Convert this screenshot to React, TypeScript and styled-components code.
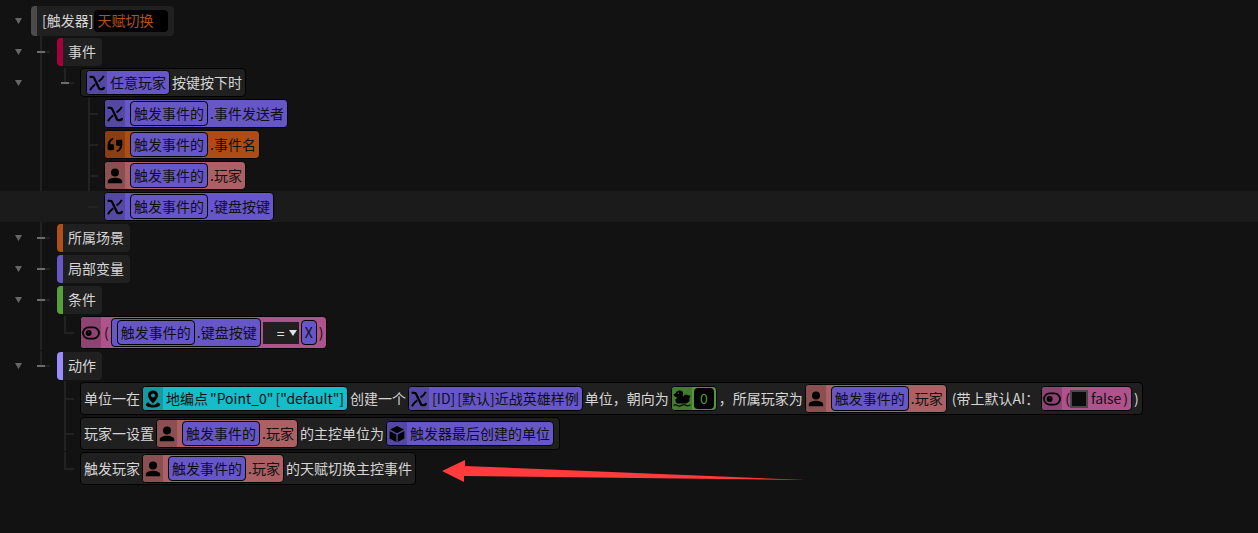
import React from "react";
import styled, { createGlobalStyle, css } from "styled-components";

const GlobalStyle = createGlobalStyle`
  * { box-sizing: border-box; }
  body {
    margin: 0;
    background: #121212;
    color: #d6d6d6;
    font-family: "Noto Sans CJK SC", "Noto Sans", sans-serif;
    font-size: 14px;
    line-height: 18px;
  }
`;

const palette = {
  any: { base: "#6656c8", icon: "#5548a3" },
  string: { base: "#ae4c14", icon: "#8c3e12" },
  player: { base: "#ac6063", icon: "#8a4f51" },
  bool: { base: "#b0528c", icon: "#8e4472" },
  point: { base: "#15bdc8", icon: "#149aa3" },
  number: { base: "#529836", icon: "#437c2e" },
};
type Tone = keyof typeof palette;

const Page = styled.main`
  padding: 5px 0 47px;
  overflow: hidden;
`;

const Tree = styled.ul`
  list-style: none;
  margin: 0;
  padding: 0;
`;

const RowItem = styled.li<{ $tall?: boolean; $active?: boolean }>`
  display: flex;
  align-items: center;
  height: ${(p) => (p.$tall ? 35 : 31)}px;
  background: ${(p) => (p.$active ? "#1b1b1b" : "transparent")};
  white-space: nowrap;
`;

const Gutter = styled.div<{ $narrow?: boolean }>`
  flex: none;
  display: flex;
  width: ${(p) => (p.$narrow ? 31 : 32)}px;
  padding-left: 12px;
`;

const Caret = styled.button`
  display: flex;
  align-items: center;
  justify-content: center;
  width: 13px;
  height: 12px;
  padding: 0;
  border: 0;
  background: none;
  color: #666;
`;

type GuideKind = "none" | "line" | "tee" | "end" | "stub";

const GuideCell = styled.div<{ $kind: GuideKind }>`
  flex: none;
  display: flex;
  align-items: center;
  align-self: stretch;
  width: 24px;
  padding-left: 8px;
  background-repeat: no-repeat;
  background-position: 8px 1px;
  ${(p) =>
    (p.$kind === "line" || p.$kind === "tee") &&
    css`
      background-image: linear-gradient(#222, #222);
      background-size: 2px 100%;
      background-position: 8px 0;
    `}
  ${(p) =>
    p.$kind === "end" &&
    css`
      background-image: linear-gradient(#222, #222);
      background-size: 2px 50%;
    `}
`;

const Dash = styled.span<{ $open?: boolean }>`
  width: 10px;
  height: 2px;
  background: #222;
  ${(p) =>
    p.$open &&
    css`
      width: 13px;
      margin-left: -3px;
      background: linear-gradient(to right, #6c6c6c 8px, #222 8px);
    `}
`;

const Section = styled.div<{ $root?: boolean; $color: string }>`
  display: flex;
  align-items: center;
  height: ${(p) => (p.$root ? 30 : 28)}px;
  margin-left: ${(p) => (p.$root ? 0 : 1)}px;
  padding: 0 6px 0 5px;
  border-left: 6px solid ${(p) => p.$color};
  border-radius: 4px;
  background: #202020;
`;

const NameInput = styled.input`
  width: 74px;
  height: 22px;
  margin-left: 1px;
  padding: 0 3px 2px;
  border: 0;
  border-radius: 4px;
  background: #000;
  color: #b5521a;
  font: inherit;
`;

const Statement = styled.div<{ $slim?: boolean }>`
  display: flex;
  align-items: center;
  gap: 2px;
  height: ${(p) => (p.$slim ? 29 : 33)}px;
  padding: 0 3px;
  border: 1px solid #000;
  border-radius: 4px;
  background: #202020;
`;

const Text = styled.span`
  padding-bottom: 2px;
  white-space: pre;
`;

const Chip = styled.span<{ $tone: Tone; $size?: "m" | "l" | "xl" }>`
  display: flex;
  align-items: stretch;
  height: ${(p) => (p.$size === "xl" ? 33 : p.$size === "l" ? 29 : 25)}px;
  border: 1px solid #000;
  border-radius: 4px;
  background: ${(p) => palette[p.$tone].base};
  color: #101010;
  overflow: hidden;

  ${Statement} > &:first-child { margin-left: 2px; }
  ${Statement} > &:last-child { margin-right: 2px; }
`;

const IconSlot = styled.span<{ $tone: Tone }>`
  display: flex;
  align-items: center;
  justify-content: center;
  width: 20px;
  background: ${(p) => palette[p.$tone].icon};
  color: #000;
`;

const ChipBody = styled.span<{ $tight?: boolean }>`
  display: flex;
  align-items: center;
  gap: 2px;
  padding: 0 ${(p) => (p.$tight ? 2 : 3)}px;

  > ${Chip}:first-child { margin-left: 2px; }
`;

const NumberInput = styled.input`
  width: 20px;
  height: 21px;
  padding: 0 0 2px;
  border: 0;
  border-radius: 4px;
  background: #000;
  color: #529836;
  font: inherit;
  text-align: center;
`;

const OperatorBox = styled.span`
  display: flex;
  align-items: center;
  width: 36px;
  height: 22px;
  padding-left: 14px;
  background: #202020;
  color: #e0e0e0;
`;

const OperatorSelect = styled.select`
  width: 12px;
  padding: 0;
  border: 0;
  appearance: none;
  background: none;
  color: inherit;
  font: inherit;
`;

const BoolLabel = styled.label`
  display: flex;
  align-items: center;
  gap: 3px;
`;

const BoolCheck = styled.input`
  appearance: none;
  width: 18px;
  height: 18px;
  margin: 0 0 0 -2px;
  border: 2px solid #484848;
  background: #0b0b0b;
`;

const Arrow = styled.svg`
  position: absolute;
  left: 442px;
  top: 459px;
  pointer-events: none;
`;

const VarIcon = () => (
  <svg width="16" height="16" viewBox="0 0 16 16" fill="none" stroke="currentColor">
    <path d="M0.6 1.8H3.6C4.4 1.8 4.8 2.2 5.1 2.9L10 13.2C10.3 13.9 10.8 14.2 11.6 14.2H12.6C14 14.2 14.8 13.4 15.2 12" strokeWidth="2.3" />
    <path d="M14.8 0.8C13.6 3.4 12 4.6 9.6 6.4" strokeWidth="1.9" />
    <path d="M6.2 9.2C4 11 2.4 12.6 1 15.2" strokeWidth="1.9" />
  </svg>
);

const QuoteIcon = () => (
  <svg width="16" height="16" viewBox="0 0 16 16" fill="currentColor">
    <path d="M6 0.8C2.4 2 0.6 4.8 0.6 8.4V11.8C0.6 12.6 1.1 13.2 2 13.2H5.6C6.5 13.2 7 12.6 7 11.8V8.6C7 7.8 6.5 7.2 5.6 7.2H3.2C3.2 4.8 4.2 3.2 6.4 2.4Z" />
    <path d="M10 15.2C13.6 14 15.4 11.2 15.4 7.6V4.2C15.4 3.4 14.9 2.8 14 2.8H10.4C9.5 2.8 9 3.4 9 4.2V7.4C9 8.2 9.5 8.8 10.4 8.8H12.8C12.8 11.2 11.8 12.8 9.6 13.6Z" />
  </svg>
);

const PlayerIcon = () => (
  <svg width="16" height="16" viewBox="0 0 16 16" fill="currentColor">
    <circle cx="8" cy="4.4" r="4" />
    <path d="M0.8 15.2V13.4C0.8 11 4.6 9.8 8 9.8S15.2 11 15.2 13.4V15.2Z" />
  </svg>
);

const ToggleIcon = () => (
  <svg width="18" height="14" viewBox="0 0 18 14">
    <rect x="1" y="1.4" width="16" height="11.2" rx="5.6" fill="none" stroke="currentColor" strokeWidth="1.8" />
    <circle cx="6.6" cy="7" r="3" fill="currentColor" />
    <circle cx="6.8" cy="6" r="0.6" fill={palette.bool.icon} />
  </svg>
);

const PinIcon = () => (
  <svg width="16" height="18" viewBox="0 0 16 18" fill="currentColor">
    <path fillRule="evenodd" d="M8 0.4A5 5 0 0 0 3 5.4C3 8.6 8 13.4 8 13.4S13 8.6 13 5.4A5 5 0 0 0 8 0.4ZM8 3.4A2 2 0 1 1 8 7.4A2 2 0 0 1 8 3.4Z" />
    <path d="M3.6 12.4C2 12.8 0.8 13.6 0.8 14.6C0.8 16.4 4.2 17.6 8 17.6S15.2 16.4 15.2 14.6C15.2 13.6 14 12.8 12.4 12.4C11.4 13.8 9.8 14.8 8 14.8S4.6 13.8 3.6 12.4Z" />
  </svg>
);

const CubeIcon = () => (
  <svg width="16" height="18" viewBox="0 0 16 18" fill="currentColor">
    <path d="M8 1L15 4.6L8 8.2L1 4.6Z" />
    <path d="M0.6 6L7.3 9.4V17L0.6 13.4Z" />
    <path d="M15.4 6L8.7 9.4V17L15.4 13.4Z" />
  </svg>
);

const DuckIcon = () => (
  <svg width="18" height="17" viewBox="0 0 18 17" fill="currentColor">
    <path
      fillRule="evenodd"
      d="M0.6 4.4L2.8 3.2C3.2 1.2 4.8 0.4 6.6 0.4C9 0.4 10.4 2 10.2 4C10.1 5.2 9.4 6 9.8 6.6C11 6.4 11 4.6 12.6 4.4C14.4 4.2 15.6 5.6 17.2 5.4C17.4 7.4 16.6 8.4 15.6 9C16.4 9.2 16.6 9.4 16.8 9.6C16.4 12 14.4 13.6 11.6 13.6H6.6C3.8 13.6 2.2 12.2 2.4 10.2C2.5 8.8 4 8 5 7.2C3.4 7.4 1.2 6.6 0.6 4.4ZM5.4 2.4A0.8 0.8 0 1 0 5.4 4A0.8 0.8 0 0 0 5.4 2.4Z"
    />
    <path d="M0.6 15.4C2 14.2 3 14.4 4.4 15.4S7.4 16.2 9 15.2S12 14.6 13.4 15.4S16 15.8 17.4 14.8" fill="none" stroke="currentColor" strokeWidth="1.2" />
  </svg>
);

const Triangle = ({ width, height }: { width: number; height: number }) => (
  <svg width={width} height={height} viewBox="0 0 8 6" preserveAspectRatio="none" fill="currentColor" aria-hidden="true">
    <path d="M0 0H8L4 6Z" />
  </svg>
);

const icons = {
  any: VarIcon,
  string: QuoteIcon,
  player: PlayerIcon,
  bool: ToggleIcon,
  point: PinIcon,
  number: DuckIcon,
  object: CubeIcon,
};

interface ValueProps {
  tone: Tone;
  icon?: keyof typeof icons;
  size?: "m" | "l" | "xl";
  tight?: boolean;
  children: React.ReactNode;
}

function Value({ tone, icon, size, tight, children }: ValueProps) {
  const Icon = icon ? icons[icon] : null;
  return (
    <Chip $tone={tone} $size={size}>
      {Icon && (
        <IconSlot $tone={tone}>
          <Icon />
        </IconSlot>
      )}
      <ChipBody $tight={tight}>
        {typeof children === "string" ? <Text>{children}</Text> : children}
      </ChipBody>
    </Chip>
  );
}

function EventValue({ tone, icon, field }: { tone: Tone; icon?: keyof typeof icons; field: string }) {
  return (
    <Value tone={tone} icon={icon} size="l">
      <Value tone="any">触发事件的</Value>
      <Text>.{field}</Text>
    </Value>
  );
}

interface RowProps {
  guides?: GuideKind[];
  open?: boolean;
  root?: boolean;
  tall?: boolean;
  active?: boolean;
  children: React.ReactNode;
}

function Row({ guides = [], open, root, tall, active, children }: RowProps) {
  return (
    <RowItem $tall={tall} $active={active}>
      <Gutter $narrow={root}>
        {open && (
          <Caret type="button" aria-label="折叠">
            <Triangle width={7} height={6} />
          </Caret>
        )}
      </Gutter>
      {guides.map((kind, i) => (
        <GuideCell key={i} $kind={kind}>
          {(kind === "tee" || kind === "end" || kind === "stub") && <Dash $open={open} />}
        </GuideCell>
      ))}
      {children}
    </RowItem>
  );
}

export default function App() {
  return (
    <Page>
      <GlobalStyle />
      <Tree>
        <Row open root>
          <Section $root $color="#4b4b4b">
            <Text>[触发器]</Text>
            <NameInput aria-label="触发器" defaultValue="天赋切换" />
          </Section>
        </Row>
        <Row open guides={["tee"]}>
          <Section $color="#a3003c"><Text>事件</Text></Section>
        </Row>
        <Row open guides={["line", "end"]}>
          <Statement $slim>
            <Value tone="any" icon="any">任意玩家</Value>
            <Text>按键按下时</Text>
          </Statement>
        </Row>
        <Row guides={["line", "none", "tee"]}>
          <EventValue tone="any" icon="any" field="事件发送者" />
        </Row>
        <Row guides={["line", "none", "tee"]}>
          <EventValue tone="string" icon="string" field="事件名" />
        </Row>
        <Row guides={["line", "none", "tee"]}>
          <EventValue tone="player" icon="player" field="玩家" />
        </Row>
        <Row active guides={["none", "none", "stub"]}>
          <EventValue tone="any" icon="any" field="键盘按键" />
        </Row>
        <Row open guides={["tee"]}>
          <Section $color="#b05018"><Text>所属场景</Text></Section>
        </Row>
        <Row open guides={["tee"]}>
          <Section $color="#6656c8"><Text>局部变量</Text></Section>
        </Row>
        <Row open guides={["tee"]}>
          <Section $color="#55a038"><Text>条件</Text></Section>
        </Row>
        <Row tall guides={["line", "end"]}>
          <Value tone="bool" icon="bool" size="xl">
            <Text>(</Text>
            <EventValue tone="any" field="键盘按键" />
            <OperatorBox>
              <OperatorSelect aria-label="运算符" defaultValue="=">
                <option>=</option>
                <option>≠</option>
              </OperatorSelect>
              <Triangle width={8} height={6} />
            </OperatorBox>
            <Value tone="any">X</Value>
            <Text>)</Text>
          </Value>
        </Row>
        <Row open guides={["end"]}>
          <Section $color="#9a8cff"><Text>动作</Text></Section>
        </Row>
        <Row tall guides={["none", "tee"]}>
          <Statement>
            <Text>单位一在</Text>
            <Value tone="point" icon="point">
              <Text>地编点</Text>
              <Text>"Point_0"</Text>
              <Text>["default"]</Text>
            </Value>
            <Text>创建一个</Text>
            <Value tone="any" icon="any">
              <Text>[ID]</Text>
              <Text>[默认]近战英雄样例</Text>
            </Value>
            <Text>单位，朝向为</Text>
            <Value tone="number" icon="number" tight>
              <NumberInput aria-label="朝向" defaultValue="0" />
            </Value>
            <Text>，所属玩家为</Text>
            <EventValue tone="player" icon="player" field="玩家" />
            <Text>{" (带上默认AI："}</Text>
            <Value tone="bool" icon="bool">
              <Text>(</Text>
              <BoolLabel>
                <BoolCheck type="checkbox" />
                <Text>false</Text>
              </BoolLabel>
              <Text>)</Text>
            </Value>
            <Text>)</Text>
          </Statement>
        </Row>
        <Row tall guides={["none", "tee"]}>
          <Statement>
            <Text>玩家一设置</Text>
            <EventValue tone="player" icon="player" field="玩家" />
            <Text>的主控单位为</Text>
            <Value tone="any" icon="object">触发器最后创建的单位</Value>
          </Statement>
        </Row>
        <Row tall guides={["none", "end"]}>
          <Statement>
            <Text>触发玩家</Text>
            <EventValue tone="player" icon="player" field="玩家" />
            <Text>的天赋切换主控事件</Text>
          </Statement>
        </Row>
      </Tree>
      <Arrow width="364" height="24" viewBox="0 0 364 24" fill="#ff3b3b" aria-hidden="true">
        <path d="M0 12L23 1V7L364 21L22 17V23Z" />
      </Arrow>
    </Page>
  );
}
